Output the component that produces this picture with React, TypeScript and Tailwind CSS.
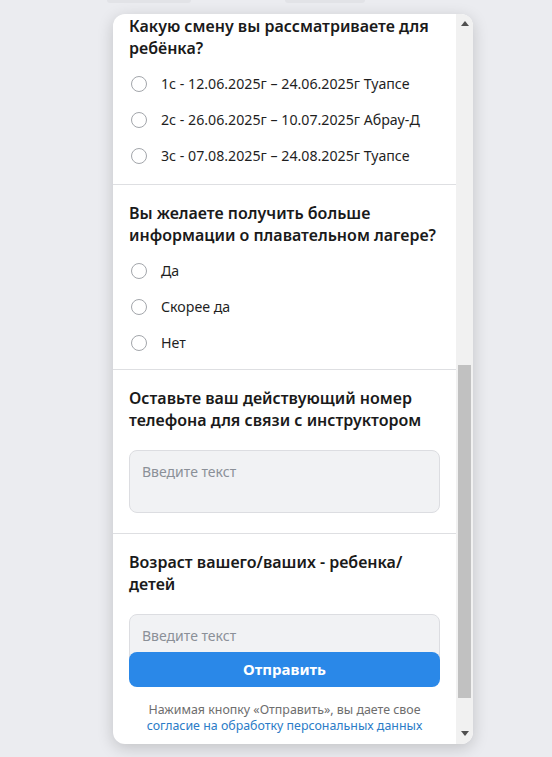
import React from "react";

const font = { fontFamily: '"Noto Sans", "Open Sans", sans-serif' };

function Radio({ label }: { label: string }) {
  return (
    <div className="flex h-9 items-center">
      <span className="ml-[2px] h-4 w-4 shrink-0 rounded-full border-[1.5px] border-[#a3a6ab] bg-white" />
      <span className="ml-[14px] text-[14.2px] text-[#1f1f1f]">{label}</span>
    </div>
  );
}

function Heading({ children }: { children: React.ReactNode }) {
  return (
    <div className="text-[16px] font-semibold leading-[22px] text-[#1a1a1a]">{children}</div>
  );
}

function Input() {
  return (
    <div className="h-[63px] rounded-lg border border-[#dcdde1] bg-[#f1f2f4] px-3 pt-[11px] text-[14px] leading-[20px] text-[#8b9098]">
      Введите текст
    </div>
  );
}

export default function App() {
  return (
    <div className="min-h-[757px] w-[552px] bg-[#ebecf0]" style={font}>
      <div className="flex h-[14px] items-start">
        <div className="ml-[107px] h-[3px] w-[84px] rounded-b-md bg-[#e2e3e7]" />
        <div className="ml-[94px] h-[3px] w-[80px] rounded-b-md bg-[#e2e3e7]" />
      </div>
      <div className="ml-[113px] flex h-[730px] w-[360px] overflow-hidden rounded-xl bg-white shadow-[0_4px_16px_rgba(0,0,0,0.18)]">
        <div className="relative flex w-[343px] flex-col overflow-hidden">
          <div className="-mt-[15px] flex flex-col">
            <div className="px-4 pb-[10px] pt-4">
              <Heading>
                Какую смену вы рассматриваете для
                <br />
                ребёнка?
              </Heading>
              <div className="mt-[7px]">
                <Radio label="1с - 12.06.2025г – 24.06.2025г Туапсе" />
                <Radio label="2с - 26.06.2025г – 10.07.2025г Абрау-Д" />
                <Radio label="3с - 07.08.2025г – 24.08.2025г Туапсе" />
              </div>
            </div>
            <div className="border-t border-[#dedfe2] px-4 pb-2 pt-[17px]">
              <Heading>
                Вы желаете получить больше
                <br />
                информации о плавательном лагере?
              </Heading>
              <div className="mt-[7px]">
                <Radio label="Да" />
                <Radio label="Скорее да" />
                <Radio label="Нет" />
              </div>
            </div>
            <div className="border-t border-[#dedfe2] px-4 pb-[20px] pt-[17px]">
              <Heading>
                Оставьте ваш действующий номер
                <br />
                телефона для связи с инструктором
              </Heading>
              <div className="mt-[19px]">
                <Input />
              </div>
            </div>
            <div className="border-t border-[#dedfe2] px-4 pb-[20px] pt-[17px]">
              <Heading>
                Возраст вашего/ваших - ребенка/
                <br />
                детей
              </Heading>
              <div className="mt-[19px]">
                <Input />
              </div>
            </div>
          </div>
          <div className="absolute bottom-0 left-0 right-0 px-4 pb-[10px]">
            <div className="flex h-[35px] items-center justify-center rounded-lg bg-[#2a88e8] text-[15px] font-bold text-white">
              Отправить
            </div>
            <div className="flex flex-col items-center bg-white pt-[15px] text-center text-[12.4px] leading-[16px] text-[#6e6e6e]">
              <span>Нажимая кнопку «Отправить», вы даете свое</span>
              <span className="text-[#2b7cc7]">согласие на обработку персональных данных</span>
            </div>
          </div>
        </div>
        <div className="flex w-[17px] flex-col items-center bg-[#f1f1f1]">
          <div className="flex h-[17px] items-center justify-center pt-[2px]">
            <svg width="8" height="5" viewBox="0 0 8 5">
              <path d="M0 5 L4 0 L8 5 Z" fill="#505050" />
            </svg>
          </div>
          <div className="mt-[334px] h-[333px] w-[13px] bg-[#c1c1c1]" />
          <div className="mt-auto flex h-[17px] items-center justify-center pb-[4px]">
            <svg width="8" height="5" viewBox="0 0 8 5">
              <path d="M0 0 L8 0 L4 5 Z" fill="#505050" />
            </svg>
          </div>
        </div>
      </div>
    </div>
  );
}
